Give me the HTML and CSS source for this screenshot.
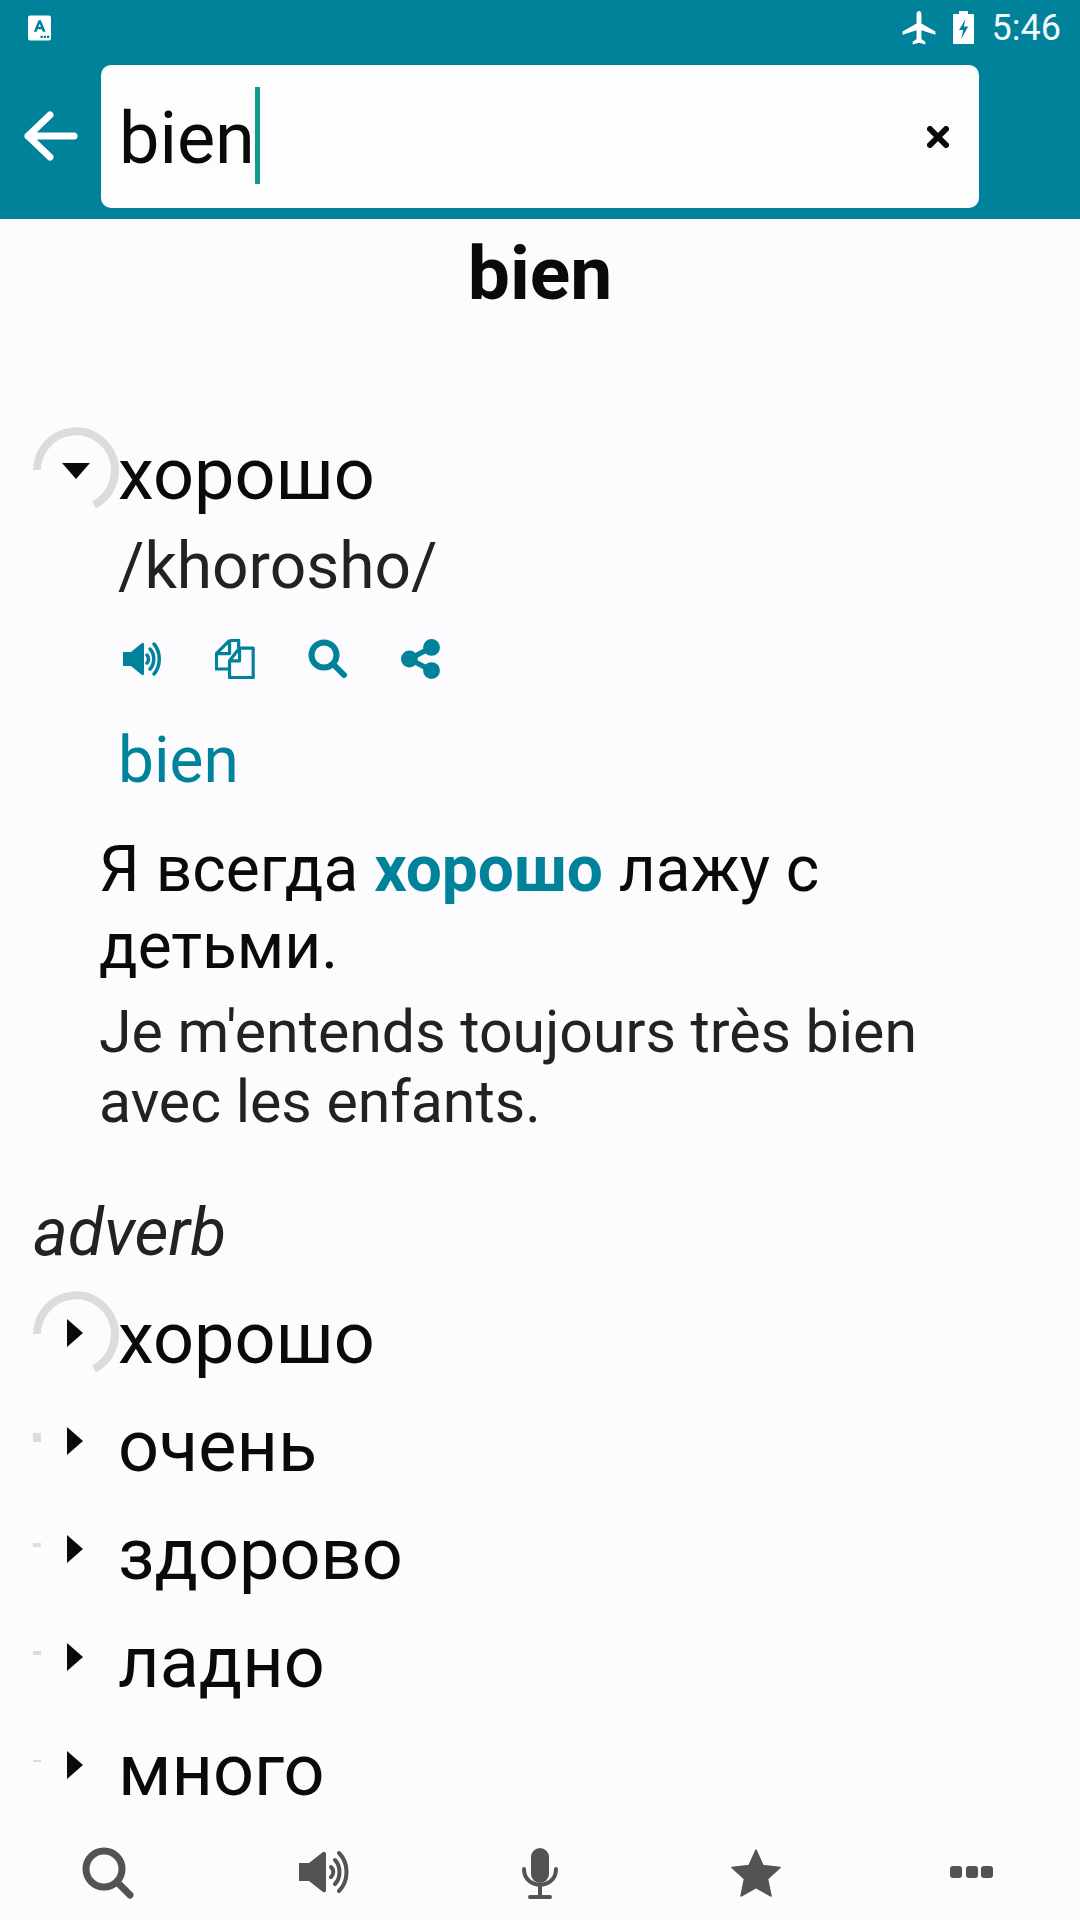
FILE: index.html

```html
<!DOCTYPE html>
<html lang="fr">
<head>
  <meta charset="UTF-8" />
  <title>bien</title>
  <link rel="stylesheet" href="styles.css">
</head>
<body>
  <header class="top">
    <div class="status-bar">
      <svg class="note-icon" viewBox="0 0 24 26"><rect width="24" height="26" rx="2" fill="#fff"/><path d="M6 17 11 5h2.400l5 12h-3l-1-2.600H10L9 17zM10.900 12h2.600L12.200 8.400z" fill="#00829b"/><path d="M13 21h2.400v2.400H13zM16.400 21h2.400v2.400h-2.400zM19.800 21h2.400v2.400h-2.400z" fill="#00829b"/></svg>
      <div class="status-right">
        <svg class="plane-icon" viewBox="0 0 34 34"><path d="M17 1c-1.500 0-2.300 1.600-2.300 3.200v8.600L1.500 20.400v3l13.200-4.200v8.200L11 30v2.600l6-1.700 6 1.700V30l-3.700-2.600v-8.200l13.200 4.200v-3l-13.200-7.600V4.200C19.300 2.600 18.500 1 17 1z" fill="#fff"/></svg>
        <svg class="battery-icon" viewBox="0 0 21 33"><path fill-rule="evenodd" d="M6 0h9v3h5a1 1 0 0 1 1 1v28a1 1 0 0 1-1 1H1a1 1 0 0 1-1-1V4a1 1 0 0 1 1-1h5zM12.500 8 6 19h4.200l-2 9 7-12.500h-4.400z" fill="#fff"/></svg>
        <span class="clock">5:46</span>
      </div>
    </div>
    <div class="search-row">
      <svg class="back-icon" viewBox="0 0 54 50"><path d="M4 25h46M26 4 4 25l22 21" fill="none" stroke="#fff" stroke-width="7" stroke-linecap="round" stroke-linejoin="round"/></svg>
      <div class="search-box">
        <span class="search-text">bien</span><span class="caret"></span>
        <svg class="clear-icon" viewBox="0 0 22 22"><path d="M3 3l16 16M19 3 3 19" fill="none" stroke="#0a0a0a" stroke-width="6" stroke-linecap="round"/></svg>
      </div>
    </div>
  </header>

  <main class="content">
    <h1 class="headword">bien</h1>

    <div class="entry entry-open">
      <span class="toggle">
        <svg class="ring" viewBox="0 0 86 86"><path d="M4 43A39 39 0 1 1 61 78" fill="none" stroke="#dcdcdc" stroke-width="8"/></svg>
        <span class="arrow-down"></span>
      </span>
      <span class="word">хорошо</span>
    </div>
    <div class="translit">/khorosho/</div>
    <div class="actions">
      <svg class="action" viewBox="0 0 40 40"><path d="M1 13h8l11-9a1.500 1.500 0 0 1 2 1v30a1.500 1.500 0 0 1-2 1L9 27H1z" fill="#00829b"/><path d="M25 16c2 2 2 6 0 8M28 10c5 5 5 15 0 20M32 5c7 8 7 22 0 30" fill="none" stroke="#00829b" stroke-width="3.500" stroke-linecap="round"/></svg>
      <svg class="action" viewBox="0 0 44 44"><path d="M16 1.500h10V10M16 1.500 1.500 16v17H16M16 1.500V16H1.500M27 10h15v32.500H16V24zM27 10v14H16" fill="none" stroke="#00829b" stroke-width="3.500" stroke-linejoin="round"/></svg>
      <svg class="action" viewBox="0 0 40 40"><circle cx="16" cy="16" r="12.500" fill="none" stroke="#00829b" stroke-width="6"/><path d="M25 25l11 11" stroke="#00829b" stroke-width="6" stroke-linecap="round"/></svg>
      <svg class="action" viewBox="0 0 38 38"><path d="M29 8 8 19l21 11" fill="none" stroke="#00829b" stroke-width="5"/><circle cx="29" cy="8" r="8" fill="#00829b"/><circle cx="8" cy="19" r="8" fill="#00829b"/><circle cx="29" cy="30" r="8" fill="#00829b"/></svg>
    </div>
    <div class="meaning">bien</div>
    <p class="example">Я всегда <b>хорошо</b> лажу с детьми.</p>
    <p class="example-fr">Je m'entends toujours très bien avec les enfants.</p>

    <div class="pos">adverb</div>
    <div class="entry">
      <span class="toggle">
        <svg class="ring" viewBox="0 0 86 86"><path d="M4 43A39 39 0 1 1 61 78" fill="none" stroke="#dcdcdc" stroke-width="8"/></svg>
        <span class="arrow-right"></span>
      </span>
      <span class="word">хорошо</span>
    </div>
    <div class="entry">
      <span class="toggle"><i class="tick tick-1"></i><span class="arrow-right"></span></span>
      <span class="word">очень</span>
    </div>
    <div class="entry">
      <span class="toggle"><i class="tick tick-2"></i><span class="arrow-right"></span></span>
      <span class="word">здорово</span>
    </div>
    <div class="entry">
      <span class="toggle"><i class="tick tick-2"></i><span class="arrow-right"></span></span>
      <span class="word">ладно</span>
    </div>
    <div class="entry">
      <span class="toggle"><i class="tick tick-3"></i><span class="arrow-right"></span></span>
      <span class="word">много</span>
    </div>
  </main>

  <nav class="bottom-nav">
    <svg class="nav-icon" viewBox="0 0 52 52"><circle cx="22" cy="22" r="18" fill="none" stroke="#555256" stroke-width="7"/><path d="M35 35l13 13" stroke="#555256" stroke-width="7" stroke-linecap="round"/></svg>
    <svg class="nav-icon" viewBox="0 0 52 52"><path d="M1 16h10L25 5a2 2 0 0 1 3 1.500v37a2 2 0 0 1-3 1.500L11 34H1z" fill="#555256"/><path d="M33 20c3 3 3 7 0 10M37 13c6 6 6 18 0 24M41 6c10 10 10 28 0 38" fill="none" stroke="#555256" stroke-width="4" stroke-linecap="round"/></svg>
    <svg class="nav-icon" viewBox="0 0 52 52"><rect x="17" y="1" width="18" height="35" rx="9" fill="#555256"/><path d="M10 22c0 21 32 21 32 0M26 38v10M16 50h20" fill="none" stroke="#555256" stroke-width="4" stroke-linecap="round"/></svg>
    <svg class="nav-icon" viewBox="0 0 52 52"><path d="M26 3 33 18.500 50 20.500 37.500 32 41 49 26 40.500 11 49 14.500 32 2 20.500 19 18.500z" fill="#555256" stroke="#555256" stroke-width="1.500" stroke-linejoin="round"/></svg>
    <svg class="nav-icon" viewBox="0 0 52 52"><rect x="4" y="19" width="12" height="12" rx="3" fill="#555256"/><rect x="20" y="19" width="12" height="12" rx="3" fill="#555256"/><rect x="35" y="19" width="12" height="12" rx="3" fill="#555256"/></svg>
  </nav>
</body>
</html>
```

FILE: styles.css

```css
* {
  box-sizing: border-box;
  margin: 0;
  padding: 0;
}
body {
  width: 1080px;
  height: 1920px;
  display: flex;
  flex-direction: column;
  overflow: hidden;
  background-color: #fcfbfd;
  font-family: Roboto, sans-serif;
  color: #0a0a0a;
}
.top {
  height: 219px;
  background-color: #00829b;
}
.status-bar {
  height: 65px;
  display: flex;
  align-items: center;
  justify-content: space-between;
  padding: 0 19px 10px 28px;
}
.note-icon {
  width: 23px;
  height: 26px;
}
.status-right {
  display: flex;
  align-items: center;
}
.plane-icon {
  width: 36px;
  height: 36px;
  margin-right: 16px;
}
.battery-icon {
  width: 21px;
  height: 33px;
  margin-right: 18px;
}
.clock {
  font-size: 36px;
  color: #f4fafb;
}
.search-row {
  display: flex;
  align-items: center;
  padding-left: 24px;
}
.back-icon {
  width: 54px;
  height: 50px;
  margin: 0 23px 2px 0;
}
.search-box {
  width: 878px;
  height: 143px;
  display: flex;
  align-items: center;
  padding: 0 30px 0 18px;
  background-color: #fdfdfe;
  border-radius: 10px;
}
.search-text {
  font-size: 72px;
  margin-top: 4px;
}
.caret {
  width: 5px;
  height: 97px;
  margin-bottom: 2px;
  background-color: #0f9c8f;
}
.clear-icon {
  width: 22px;
  height: 22px;
  margin-left: auto;
}
.content {
  flex: 1;
  overflow: hidden;
}
.headword {
  font-size: 75px;
  line-height: 84px;
  margin-top: 12px;
  text-align: center;
}
.entry {
  display: flex;
  align-items: center;
  height: 108px;
}
.entry-open {
  margin-top: 101px;
  height: 106px;
}
.toggle {
  position: relative;
  width: 118px;
  height: 86px;
  flex: none;
}
.ring {
  position: absolute;
  left: 33px;
  top: 1px;
  width: 86px;
  height: 86px;
}
.arrow-down {
  position: absolute;
  left: 62px;
  top: 37px;
  border-left: 14px solid transparent;
  border-right: 14px solid transparent;
  border-top: 16px solid #0a0a0a;
}
.arrow-right {
  position: absolute;
  left: 67px;
  top: 29px;
  border-top: 14px solid transparent;
  border-bottom: 14px solid transparent;
  border-left: 16px solid #0a0a0a;
}
.tick {
  position: absolute;
  left: 33px;
  background-color: #dcdcdc;
}
.tick-1 {
  top: 35px;
  width: 8px;
  height: 9px;
}
.tick-2 {
  top: 37px;
  width: 8px;
  height: 4px;
}
.tick-3 {
  top: 38px;
  width: 8px;
  height: 2px;
}
.word {
  font-size: 72px;
  margin-top: 10px;
}
.translit {
  font-size: 64px;
  line-height: 84px;
  margin: 3px 0 0 118px;
  color: #222;
}
.actions {
  display: flex;
  gap: 53px;
  margin: 30px 0 0 122px;
}
.action {
  width: 40px;
  height: 40px;
}
.meaning {
  font-size: 64px;
  line-height: 76px;
  margin: 44px 0 0 118px;
  color: #00829b;
}
.example {
  font-size: 64px;
  line-height: 77px;
  margin: 32px 100px 0 99px;
}
.example b {
  color: #00829b;
}
.example-fr {
  font-size: 59px;
  line-height: 70px;
  margin: 12px 100px 0 99px;
  color: #222;
}
.pos {
  font-size: 66px;
  font-style: italic;
  line-height: 80px;
  margin: 56px 0 6px 33px;
  color: #222;
}
.bottom-nav {
  flex: none;
  height: 94px;
  display: grid;
  grid-template-columns: repeat(5, 216px);
  justify-items: center;
  align-items: center;
  background-color: #fcfbfd;
}
.nav-icon {
  width: 52px;
  height: 52px;
}
```
